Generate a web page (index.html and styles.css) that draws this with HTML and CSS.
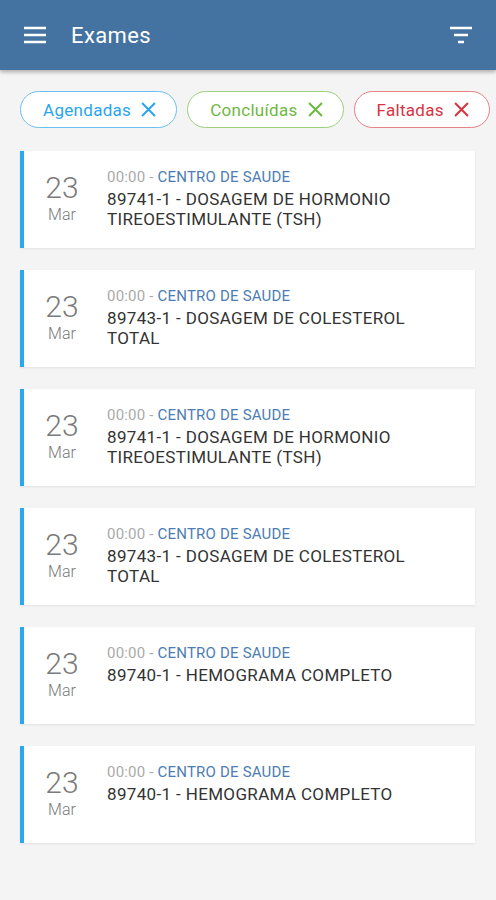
FILE: index.html
```html
<!DOCTYPE html>
<html lang="pt">
<head>
	<meta charset="UTF-8">
	<meta name="viewport" content="width=device-width, initial-scale=1.0">
	<title>Exames</title>
	<link rel="stylesheet" href="styles.css">
</head>
<body>
	<header class="topbar">
		<svg class="menu-icon" width="24" height="24" viewBox="0 0 24 24"><path d="M1 5h22M1 12h22M1 19h22" stroke="#fff" stroke-width="2.6" fill="none"/></svg>
		<span class="title">Exames</span>
		<svg class="filter-icon" width="24" height="24" viewBox="0 0 24 24"><path d="M1 5h22M5 12h14M9 19h6" stroke="#fff" stroke-width="2.6" fill="none"/></svg>
	</header>

	<div class="chips">
		<span class="chip chip-blue">Agendadas <svg width="15" height="15" viewBox="0 0 14 14"><path d="M1 1l12 12M13 1L1 13" stroke="currentColor" stroke-width="1.9" fill="none"/></svg></span>
		<span class="chip chip-green">Concluídas <svg width="15" height="15" viewBox="0 0 14 14"><path d="M1 1l12 12M13 1L1 13" stroke="currentColor" stroke-width="1.9" fill="none"/></svg></span>
		<span class="chip chip-red">Faltadas <svg width="15" height="15" viewBox="0 0 14 14"><path d="M1 1l12 12M13 1L1 13" stroke="currentColor" stroke-width="1.9" fill="none"/></svg></span>
	</div>

	<ul class="list">
		<li class="card">
			<div class="date"><span class="day">23</span><span class="month">Mar</span></div>
			<div class="info">
				<div class="meta"><span class="time">00:00 - </span>CENTRO DE SAUDE</div>
				<div class="name">89741-1 - DOSAGEM DE HORMONIO TIREOESTIMULANTE (TSH)</div>
			</div>
		</li>
		<li class="card">
			<div class="date"><span class="day">23</span><span class="month">Mar</span></div>
			<div class="info">
				<div class="meta"><span class="time">00:00 - </span>CENTRO DE SAUDE</div>
				<div class="name">89743-1 - DOSAGEM DE COLESTEROL TOTAL</div>
			</div>
		</li>
		<li class="card">
			<div class="date"><span class="day">23</span><span class="month">Mar</span></div>
			<div class="info">
				<div class="meta"><span class="time">00:00 - </span>CENTRO DE SAUDE</div>
				<div class="name">89741-1 - DOSAGEM DE HORMONIO TIREOESTIMULANTE (TSH)</div>
			</div>
		</li>
		<li class="card">
			<div class="date"><span class="day">23</span><span class="month">Mar</span></div>
			<div class="info">
				<div class="meta"><span class="time">00:00 - </span>CENTRO DE SAUDE</div>
				<div class="name">89743-1 - DOSAGEM DE COLESTEROL TOTAL</div>
			</div>
		</li>
		<li class="card">
			<div class="date"><span class="day">23</span><span class="month">Mar</span></div>
			<div class="info">
				<div class="meta"><span class="time">00:00 - </span>CENTRO DE SAUDE</div>
				<div class="name">89740-1 - HEMOGRAMA COMPLETO</div>
			</div>
		</li>
		<li class="card">
			<div class="date"><span class="day">23</span><span class="month">Mar</span></div>
			<div class="info">
				<div class="meta"><span class="time">00:00 - </span>CENTRO DE SAUDE</div>
				<div class="name">89740-1 - HEMOGRAMA COMPLETO</div>
			</div>
		</li>
	</ul>
</body>
</html>
```

FILE: styles.css
```css
body{
	margin: 0;
	background: #f4f4f4;
	font-family: Roboto, "Liberation Sans", sans-serif;
}
/* 顶部栏 */
.topbar{
	height: 70px;
	background: #4473a1;
	box-shadow: 0 2px 4px rgba(0,0,0,.3);
	display: flex;
	align-items: center;
	padding: 0 23px;
	box-sizing: border-box;
}
.title{
	color: #fff;
	font-size: 22px;
	letter-spacing: .4px;
	margin-left: 24px;
	flex: 1;
}
/* 筛选标签 */
.chips{
	display: flex;
	gap: 10px;
	padding: 21px 0 0 20px;
}
.chip{
	display: inline-flex;
	align-items: center;
	gap: 10px;
	height: 37px;
	box-sizing: border-box;
	padding: 0 20px 0 22px;
	border: 1px solid;
	border-radius: 19px;
	background: #fff;
	font-size: 17px;
	letter-spacing: .3px;
}
.chip-blue{ color: #2aa4ef; border-color: #6cc0f4; }
.chip-green{ color: #6eb843; border-color: #9ccf7e; }
.chip-red{ color: #d8343f; border-color: #e68188; }
/* 列表 */
.list{
	margin: 0;
	padding: 23px 21px 0 20px;
	list-style: none;
}
.card{
	display: flex;
	height: 97px;
	margin-bottom: 22px;
	background: #fff;
	border-left: 4px solid #29a7f1;
	box-shadow: 0 1px 2px rgba(0,0,0,.08);
}
.date{
	width: 76px;
	display: flex;
	flex-direction: column;
	align-items: center;
	color: #7a7a7a;
	padding-top: 20px;
	box-sizing: border-box;
}
.day{
	font-size: 30px;
	font-weight: 300;
	line-height: 34px;
}
.month{
	font-size: 16px;
	font-weight: 300;
	line-height: 20px;
}
.info{
	flex: 1;
	margin-left: 7px;
	padding-top: 17px;
}
.meta{
	font-size: 15px;
	line-height: 18px;
	color: #4d7db4;
	letter-spacing: .2px;
}
.time{
	color: #aaa;
}
.name{
	margin-top: 3px;
	font-size: 17px;
	line-height: 20px;
	letter-spacing: .35px;
	color: #333;
	padding-right: 30px;
}
```
